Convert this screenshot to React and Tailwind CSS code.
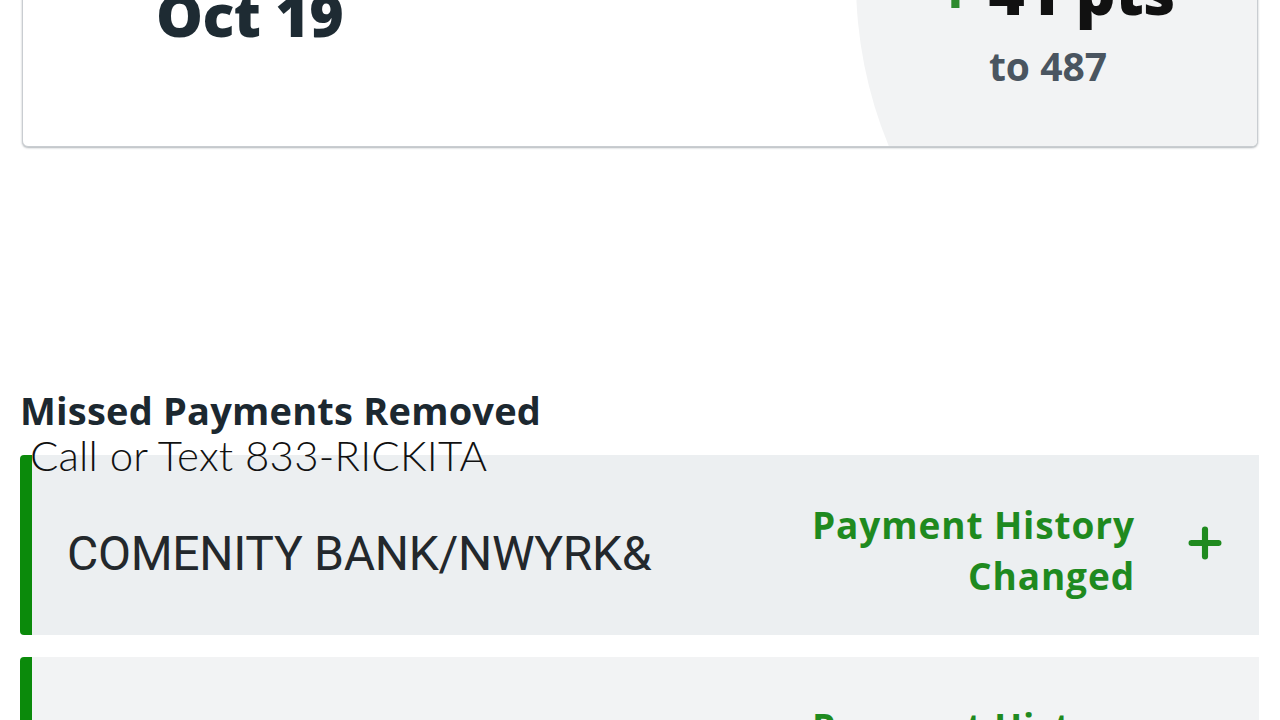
import React from "react";
import { Plus } from "lucide-react";

const rows = [
  { id: 1, name: "COMENITY BANK/NWYRK&", status: ["Payment History", "Changed"], bg: "bg-[#eceff1]" },
  { id: 2, name: "CAPITAL ONE BANK USA", status: ["Payment History", "Changed"], bg: "bg-[#f2f3f4]" },
];

const wide = { fontFamily: "'Open Sans', 'Liberation Sans', sans-serif" };

const ScoreCard = () => (
  <div className="relative -mt-[140px] mx-[22px] h-[287px] bg-white border border-[#c9cdd1] rounded-md shadow-[0_1px_2px_rgba(80,90,100,0.45)] overflow-hidden flex">
    {/* decorative circle behind the score change */}
    <div className="absolute left-[833px] top-[120px] w-[864px] h-[864px] -translate-y-1/2 rounded-full bg-[#f2f3f4]" />
    <div className="relative flex-1 pl-[133px] pt-[70px]">
      <p className="text-[28px] text-[#5b6670] font-semibold">Updated</p>
      <p className="text-[59px] leading-none font-extrabold text-[#1e2b33] tracking-[-0.5px] mt-[12px]" style={wide}>Oct 19</p>
    </div>
    <div className="relative w-[420px] flex flex-col items-center pt-[98px] pl-[2px]">
      <p className="text-[62px] leading-[64px] font-extrabold text-[#111] tracking-[-0.5px] pl-[16px]" style={wide}>
        <span className="text-[#2e8b2e]">+</span> 41 pts
      </p>
      <p className="text-[39px] leading-none font-bold text-[#4a5560] mt-[23px]" style={wide}>to 487</p>
    </div>
  </div>
);

const Row = ({ row }) => (
  <div className={`flex items-center h-[180px] ${row.bg} border-l-[12px] border-[#0b8a0b] rounded-l-[4px]`}>
    <p className="flex-1 pl-[35px] pt-[18px] text-[48px] text-[#23282c] tracking-[-0.3px]">{row.name}</p>
    <p className="text-right pt-[10px] text-[37px] leading-[51px] font-bold text-[#1f8a1f] tracking-[0.9px]" style={wide}>
      {row.status[0]}
      <br />
      {row.status[1]}
    </p>
    <div className="w-[124px] flex justify-center pl-[16px]">
      <Plus className="w-[46px] h-[46px] text-[#1f8a1f] -mt-[4px]" strokeWidth={3.2} />
    </div>
  </div>
);

export default function App() {
  return (
    <div className="relative h-[720px] overflow-hidden bg-white" style={{ fontFamily: "Roboto, 'Liberation Sans', sans-serif" }}>
      <ScoreCard />
      <div className="mt-[241px] px-[20px] pr-[21px]">
        <h2 className="text-[38px] leading-[44px] font-bold text-[#1c2830] tracking-[0.2px]" style={wide}>Missed Payments Removed</h2>
        <div className="flex flex-col gap-[22px] mt-[23px]">
          {rows.map((row) => (
            <Row key={row.id} row={row} />
          ))}
        </div>
      </div>
      {/* floating call banner */}
      <p className="absolute left-[30px] top-[429px] text-[42px] leading-[52px] font-light text-[#111] tracking-[0.2px]" style={{ fontFamily: "Lato, sans-serif" }}>
        Call or Text 833-RICKITA
      </p>
    </div>
  );
}
